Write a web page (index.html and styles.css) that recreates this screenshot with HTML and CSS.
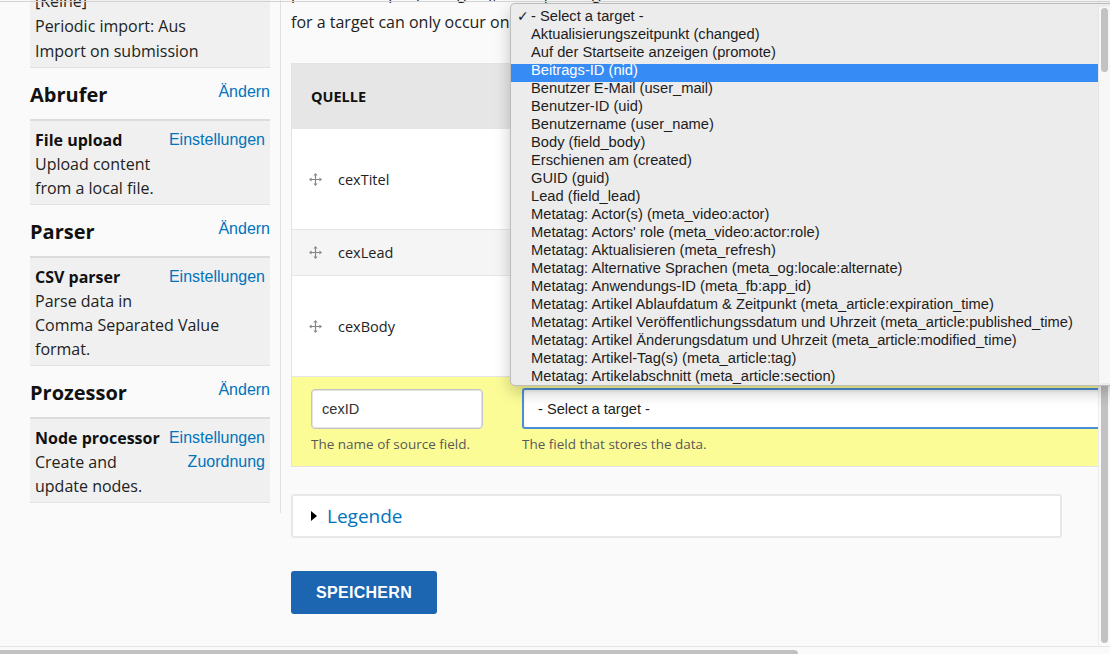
FILE: index.html
```html
<!DOCTYPE html>
<html lang="de">
<head>
<meta charset="utf-8">
<title>Zuordnung – Feeds</title>
<link rel="stylesheet" href="styles.css">
</head>
<body>
<div class="frame">
  <div class="page">
    <aside class="sidebar">
      <div class="plugin plugin-summary">
        <div>[Keine]</div>
        <div>Periodic import: Aus</div>
        <div>Import on submission</div>
      </div>

      <div class="section-head"><h2>Abrufer</h2><a href="#">Ändern</a></div>
      <div class="plugin">
        <ul class="links"><li><a href="#">Einstellungen</a></li></ul>
        <div class="plugin-title">File upload</div>
        <div class="plugin-desc">Upload content from a local file.</div>
      </div>

      <div class="section-head"><h2>Parser</h2><a href="#">Ändern</a></div>
      <div class="plugin">
        <ul class="links"><li><a href="#">Einstellungen</a></li></ul>
        <div class="plugin-title">CSV parser</div>
        <div class="plugin-desc">Parse data in Comma Separated Value format.</div>
      </div>

      <div class="section-head"><h2>Prozessor</h2><a href="#">Ändern</a></div>
      <div class="plugin">
        <ul class="links"><li><a href="#">Einstellungen</a></li><li><a href="#">Zuordnung</a></li></ul>
        <div class="plugin-title">Node processor</div>
        <div class="plugin-desc">Create and update nodes.</div>
      </div>
    </aside>

    <main class="main">
      <p class="help">pieces in Drupal (= Targets), a unique target means that a value<br>for a target can only occur once.</p>

      <table class="mapping">
        <thead>
          <tr><th class="col-source">Quelle</th><th class="col-target"></th></tr>
        </thead>
        <tbody>
          <tr class="tall">
            <td class="col-source"><span class="handle"><svg viewBox="0 0 13 13" width="13" height="13"><path d="M6.5 2.2V10.8M2.2 6.5H10.8" stroke="#858585" stroke-width="1.2" fill="none"/><path d="M6.5 0L4.4 2.6H8.6ZM6.5 13L4.4 10.4H8.6ZM0 6.5L2.6 4.4V8.6ZM13 6.5L10.4 4.4V8.6Z" fill="#858585"/></svg></span>cexTitel</td>
            <td class="col-target"></td>
          </tr>
          <tr class="short">
            <td class="col-source"><span class="handle"><svg viewBox="0 0 13 13" width="13" height="13"><path d="M6.5 2.2V10.8M2.2 6.5H10.8" stroke="#858585" stroke-width="1.2" fill="none"/><path d="M6.5 0L4.4 2.6H8.6ZM6.5 13L4.4 10.4H8.6ZM0 6.5L2.6 4.4V8.6ZM13 6.5L10.4 4.4V8.6Z" fill="#858585"/></svg></span>cexLead</td>
            <td class="col-target"></td>
          </tr>
          <tr class="tall">
            <td class="col-source"><span class="handle"><svg viewBox="0 0 13 13" width="13" height="13"><path d="M6.5 2.2V10.8M2.2 6.5H10.8" stroke="#858585" stroke-width="1.2" fill="none"/><path d="M6.5 0L4.4 2.6H8.6ZM6.5 13L4.4 10.4H8.6ZM0 6.5L2.6 4.4V8.6ZM13 6.5L10.4 4.4V8.6Z" fill="#858585"/></svg></span>cexBody</td>
            <td class="col-target"></td>
          </tr>
          <tr class="new">
            <td class="col-source">
              <input class="text-input" type="text" value="cexID">
              <div class="desc">The name of source field.</div>
            </td>
            <td class="col-target">
              <div class="select">- Select a target -</div>
              <div class="desc">The field that stores the data.</div>
            </td>
          </tr>
        </tbody>
      </table>

      <details class="legend">
        <summary><span class="tri"></span>Legende</summary>
      </details>

      <button class="btn" type="button">Speichern</button>
    </main>
  </div>

  <div class="topline"></div>

  <div class="vscroll"><div class="vthumb"></div></div>
  <div class="hscroll"><div class="hthumb"></div></div>

  <div class="dropdown">
    <ul class="options">
      <li><span class="check">✓</span>- Select a target -</li>
      <li>Aktualisierungszeitpunkt (changed)</li>
      <li>Auf der Startseite anzeigen (promote)</li>
      <li class="hl">Beitrags-ID (nid)</li>
      <li>Benutzer E-Mail (user_mail)</li>
      <li>Benutzer-ID (uid)</li>
      <li>Benutzername (user_name)</li>
      <li>Body (field_body)</li>
      <li>Erschienen am (created)</li>
      <li>GUID (guid)</li>
      <li>Lead (field_lead)</li>
      <li>Metatag: Actor(s) (meta_video:actor)</li>
      <li>Metatag: Actors' role (meta_video:actor:role)</li>
      <li>Metatag: Aktualisieren (meta_refresh)</li>
      <li>Metatag: Alternative Sprachen (meta_og:locale:alternate)</li>
      <li>Metatag: Anwendungs-ID (meta_fb:app_id)</li>
      <li>Metatag: Artikel Ablaufdatum &amp; Zeitpunkt (meta_article:expiration_time)</li>
      <li>Metatag: Artikel Veröffentlichungssdatum und Uhrzeit (meta_article:published_time)</li>
      <li>Metatag: Artikel Änderungsdatum und Uhrzeit (meta_article:modified_time)</li>
      <li>Metatag: Artikel-Tag(s) (meta_article:tag)</li>
      <li>Metatag: Artikelabschnitt (meta_article:section)</li>
    </ul>
    <div class="dd-scroll"><div class="dd-thumb"></div></div>
  </div>
</div>
</body>
</html>
```

FILE: styles.css
```css
* { box-sizing: border-box; }

html, body {
  margin: 0;
  padding: 0;
}

body {
  background: #fafafa;
  font-family: "Open Sans", "Noto Sans", sans-serif;
  font-size: 16px;
  color: #222;
}

a {
  color: #0074bd;
  text-decoration: none;
}

.frame {
  position: relative;
  width: 1110px;
  height: 654px;
  overflow: hidden;
  background: #fafafa;
}

.page {
  display: flex;
  align-items: flex-start;
  margin-top: -18px;
}

/* ---------- sidebar ---------- */
.sidebar {
  flex: 0 0 281px;
  padding: 0 10px 10px 30px;
  border-right: 1px solid #e0e0e0;
}

.plugin {
  background: #f0f0f0;
  border-top: 2px solid #dcdcdc;
  border-bottom: 1px solid #e2e2e2;
  padding: 6.5px 5px 4.5px;
  line-height: 24px;
}

.plugin-summary {
  margin-top: -1.3px;
  line-height: 25px;
  padding-bottom: 2.8px;
}

.plugin::after {
  content: "";
  display: block;
  clear: both;
}

.plugin-title {
  font-weight: 700;
  color: #111;
}

.links {
  float: right;
  margin: 0 0 16px 0;
  padding: 0;
  list-style: none;
  text-align: right;
  font-family: "Liberation Sans", Arial, sans-serif;
}

.section-head {
  display: flex;
  justify-content: space-between;
  align-items: flex-start;
  margin: 13px 0 10px;
}

.section-head h2 {
  margin: 0;
  font-size: 20px;
  line-height: 28px;
  font-weight: 700;
  color: #111;
}

.section-head a {
  font-family: "Liberation Sans", Arial, sans-serif;
  font-size: 16px;
  line-height: 21px;
}

/* ---------- main ---------- */
.main {
  flex: 0 0 auto;
  width: 791px;
  padding: 0 10px;
}

.help {
  margin: -2.8px 0 26px;
  line-height: 29px;
  white-space: nowrap;
}

.mapping {
  border-collapse: separate;
  border-spacing: 0;
  width: 880px;
  border: 1px solid #e3e3e3;
  font-size: 14.5px;
}

.mapping th {
  height: 64px;
  background: #e6e6e6;
  text-align: left;
  text-transform: uppercase;
  font-weight: 700;
  font-size: 14.5px;
  padding: 0 19px;
  color: #111;
}

.mapping .col-source {
  width: 211px;
}

.mapping td {
  border-top: 1px solid #e6e6e6;
  padding: 0 17px;
  vertical-align: middle;
  background: #fff;
  color: #222;
}

.mapping tr.tall td { height: 101px; }

.mapping tr.short td {
  height: 46px;
  background: #f5f5f5;
}

.mapping tr.new td {
  height: 90px;
  background: #fcfc97;
  vertical-align: top;
  padding: 12px 19px;
}

.handle {
  display: inline-block;
  width: 13px;
  height: 13px;
  margin-right: 16px;
  vertical-align: -1px;
}

.handle svg { display: block; }

.text-input {
  display: block;
  width: 172px;
  height: 40px;
  margin: 0;
  padding: 0 10px;
  border: 1px solid #c4c4c4;
  border-radius: 4px;
  box-shadow: inset 0 0 0 1px #e4e4e4;
  background: #fff;
  font-family: "Liberation Sans", Arial, sans-serif;
  font-size: 14.6px;
  color: #333;
}

.select {
  display: flex;
  align-items: center;
  width: 620px;
  height: 41px;
  margin-top: -1px;
  padding: 0 14px;
  border: 2px solid #4b90d6;
  border-radius: 3px;
  background: #fff;
  box-shadow: inset 0 1px 3px rgba(0, 0, 0, 0.08);
  font-family: "Liberation Sans", Arial, sans-serif;
  font-size: 14.6px;
  color: #1d1d1d;
}

.desc {
  margin-top: 5px;
  line-height: 20px;
  font-size: 13.5px;
  color: #595959;
}

.legend {
  margin-top: 27px;
  width: 771px;
  border: 2px solid #e8e8e8;
  border-radius: 3px;
  background: #fff;
}

.legend summary {
  list-style: none;
  display: flex;
  align-items: center;
  height: 40px;
  padding-left: 18px;
  font-size: 19px;
  color: #0074bd;
  cursor: pointer;
}

.legend summary::-webkit-details-marker { display: none; }

.tri {
  width: 0;
  height: 0;
  border-left: 6px solid #000;
  border-top: 5px solid transparent;
  border-bottom: 5px solid transparent;
  margin-right: 10px;
}

.btn {
  display: block;
  margin-top: 33px;
  width: 146px;
  height: 43px;
  border: 0;
  border-radius: 3px;
  background: #1b65b1;
  color: #fff;
  font-family: "Liberation Sans", Arial, sans-serif;
  font-size: 16px;
  font-weight: 700;
  letter-spacing: 0.3px;
  text-transform: uppercase;
}

/* ---------- window chrome ---------- */
.topline {
  position: absolute;
  top: 1px;
  left: 0;
  width: 100%;
  height: 1px;
  background: #d2d2d2;
  z-index: 10;
}

.vscroll {
  position: absolute;
  left: 1098px;
  top: 0;
  width: 12px;
  height: 646px;
  background: #fafafa;
  border-left: 1px solid #ededed;
  z-index: 3;
}

.vthumb {
  width: 7px;
  height: 323px;
  margin: 320px 0 0 2px;
  border-radius: 4px;
  background: #c2c2c2;
}

.hscroll {
  position: absolute;
  left: 0;
  top: 646px;
  width: 1110px;
  height: 8px;
  background: #fafafa;
  border-top: 1px solid #e4e4e4;
  z-index: 3;
}

.hthumb {
  width: 798px;
  height: 8px;
  margin-top: 3px;
  border-radius: 0 4px 4px 0;
  background: #c1c1c1;
}

/* ---------- open select popup ---------- */
.dropdown {
  position: absolute;
  left: 510px;
  top: 3px;
  width: 610px;
  height: 383px;
  display: flex;
  align-items: flex-start;
  padding-top: 6px;
  background: #ececec;
  border: 1px solid rgba(0, 0, 0, 0.2);
  border-radius: 5px;
  box-shadow: 0 6px 16px rgba(0, 0, 0, 0.22);
  overflow: hidden;
  z-index: 5;
}

.options {
  flex: 0 0 587px;
  margin: 0;
  padding: 0;
  list-style: none;
  font-family: "Liberation Sans", Arial, sans-serif;
  font-size: 14.7px;
  line-height: 13.5px;
  color: #1d1d1d;
}

.options li {
  height: 18px;
  padding-left: 20px;
  white-space: nowrap;
}

.options li.hl {
  background: #378bf5;
  color: #fff;
}

.check {
  display: inline-block;
  width: 14px;
  margin-left: -14px;
  font-family: "DejaVu Sans", sans-serif;
  font-size: 14px;
}

.dd-scroll {
  flex: 0 0 12px;
  height: 376px;
  margin-top: -3px;
  background: #f7f7f7;
  border-left: 1px solid #e6e6e6;
}

.dd-thumb {
  width: 7px;
  height: 64px;
  margin: 1px 0 0 2px;
  border-radius: 4px;
  background: #c2c2c2;
}
```
